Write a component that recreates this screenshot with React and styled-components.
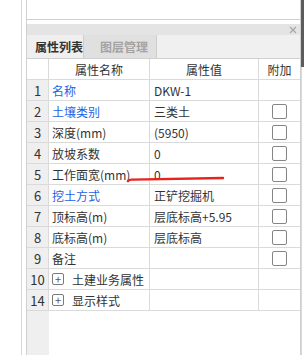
import React from "react";
import styled, { createGlobalStyle } from "styled-components";

const GlobalStyle = createGlobalStyle`
  html, body {
    margin: 0;
    padding: 0;
    background: #fff;
  }
  body {
    font-family: "Noto Sans CJK SC", "Noto Sans", sans-serif;
    font-size: 12px;
    color: #333;
  }
`;

const Page = styled.div`
  position: relative;
  display: flex;
  width: 304px;
  height: 355px;
  overflow: hidden;
`;

const Gutter = styled.div`
  width: 21px;
  flex-shrink: 0;
  border-right: 1px solid #d6d6d6;
  margin-right: 4px;
`;

const Main = styled.div`
  display: flex;
  flex-direction: column;
  width: 275px;
  flex-shrink: 0;
  box-sizing: border-box;
  border-left: 1px solid #d0d0d0;
  border-right: 1px solid #d0d0d0;
`;

const TopPanel = styled.div`
  height: 19px;
  flex-shrink: 0;
  border-bottom: 1px solid #d0d0d0;
  margin-bottom: 4px;
`;

const TitleBar = styled.div`
  height: 11px;
  flex-shrink: 0;
  background: #e4e4e4;
  display: flex;
  justify-content: flex-end;
  align-items: center;
  padding-right: 3px;
`;

const Tabs = styled.div`
  display: flex;
  height: 24px;
  box-sizing: border-box;
  flex-shrink: 0;
  background: #f0f0f0;
  border-bottom: 1px solid #d0d0d0;
`;

const Tab = styled.div`
  box-sizing: border-box;
  width: ${(p) => p.$w}px;
  padding-left: ${(p) => p.$pad}px;
  display: flex;
  align-items: center;
  font-size: 12px;
  font-weight: bold;
  color: ${(p) => (p.$active ? "#333" : "#a3a3a3")};
  background: ${(p) => (p.$active ? "#efefef" : "#e0e0e0")};
  border-right: 1px solid #cfcfcf;
`;

const Grid = styled.div`
  display: grid;
  grid-template-columns: 22px 101px 109px 41px;
  grid-auto-rows: 21px;
`;

const Cell = styled.div`
  box-sizing: border-box;
  display: flex;
  align-items: center;
  justify-content: ${(p) => (p.$center ? "center" : "flex-start")};
  padding-left: ${(p) => (p.$center ? 0 : p.$pad || 3)}px;
  border-bottom: 1px solid #dadada;
  border-right: ${(p) => (p.$last ? "none" : "1px solid #dadada")};
  color: ${(p) => (p.$blue ? "#1f5fe6" : "#333")};
  white-space: nowrap;
  overflow: visible;
`;

const IndexCell = styled(Cell)`
  background: ${(p) => (p.$head ? "#fff" : "#efefef")};
  justify-content: center;
  padding-left: 0;
  font-size: 13px;
`;

const Check = styled.div`
  width: 13px;
  height: 13px;
  border: 1px solid #858585;
  border-radius: 2px;
  background: #fff;
`;

const Expand = styled.div`
  width: 10px;
  height: 10px;
  border: 1px solid #7a7a7a;
  border-radius: 2px;
  margin-right: 8px;
  display: flex;
  align-items: center;
  justify-content: center;
  font-size: 11px;
  line-height: 1;
  color: #555;
`;

const Filler = styled.div`
  flex: 1;
  display: flex;
`;

const FillerIndex = styled.div`
  width: 22px;
  background: #efefef;
`;

const Scroll = styled.div`
  width: 3px;
  flex-shrink: 0;
  display: flex;
  flex-direction: column;
`;

const ScrollThumb = styled.div`
  height: 67px;
  background: #5c5c5c;
`;

const ScrollTrack = styled.div`
  flex: 1;
  border-left: 1px solid #d8d8d8;
`;

const Mark = styled.svg`
  position: absolute;
  left: 0;
  top: 0;
  pointer-events: none;
`;

const rows = [
  { n: 1, name: "名称", value: "DKW-1", blue: true, check: false },
  { n: 2, name: "土壤类别", value: "三类土", blue: true, check: true },
  { n: 3, name: "深度(mm)", value: "(5950)", check: true },
  { n: 4, name: "放坡系数", value: "0", check: true },
  { n: 5, name: "工作面宽(mm)", value: "0", check: true },
  { n: 6, name: "挖土方式", value: "正铲挖掘机", blue: true, check: true },
  { n: 7, name: "顶标高(m)", value: "层底标高+5.95", check: true },
  { n: 8, name: "底标高(m)", value: "层底标高", check: true },
  { n: 9, name: "备注", value: "", check: true },
];

const groups = [
  { n: 10, name: "土建业务属性" },
  { n: 14, name: "显示样式" },
];

export default function App() {
  return (
    <Page>
      <GlobalStyle />
      <Gutter />
      <Main>
        <TopPanel />
        <TitleBar>
          <svg width="8" height="8" viewBox="0 0 8 8">
            <path d="M1 1L7 7M7 1L1 7" stroke="#a6a6a6" strokeWidth="1.2" />
          </svg>
        </TitleBar>
        <Tabs>
          <Tab $active $w={57} $pad={8}>属性列表</Tab>
          <Tab $w={73} $pad={16}>图层管理</Tab>
        </Tabs>
        <Grid>
          <IndexCell $head />
          <Cell $center>属性名称</Cell>
          <Cell $center>属性值</Cell>
          <Cell $center $last>附加</Cell>
          {rows.map((r) => (
            <React.Fragment key={r.n}>
              <IndexCell>{r.n}</IndexCell>
              <Cell $blue={r.blue}>{r.name}</Cell>
              <Cell $pad={4}>{r.value}</Cell>
              <Cell $center $last>{r.check && <Check />}</Cell>
            </React.Fragment>
          ))}
          {groups.map((g) => (
            <React.Fragment key={g.n}>
              <IndexCell>{g.n}</IndexCell>
              <Cell>
                <Expand>+</Expand>
                {g.name}
              </Cell>
              <Cell />
              <Cell $last />
            </React.Fragment>
          ))}
        </Grid>
        <Filler>
          <FillerIndex />
        </Filler>
      </Main>
      <Scroll>
        <ScrollThumb />
        <ScrollTrack />
      </Scroll>
      <Mark width="304" height="355">
        <path
          d="M128 181 Q129 179.5 132 179.6 L223 178"
          stroke="#e8231c"
          strokeWidth="2.4"
          fill="none"
          strokeLinecap="round"
        />
      </Mark>
    </Page>
  );
}
